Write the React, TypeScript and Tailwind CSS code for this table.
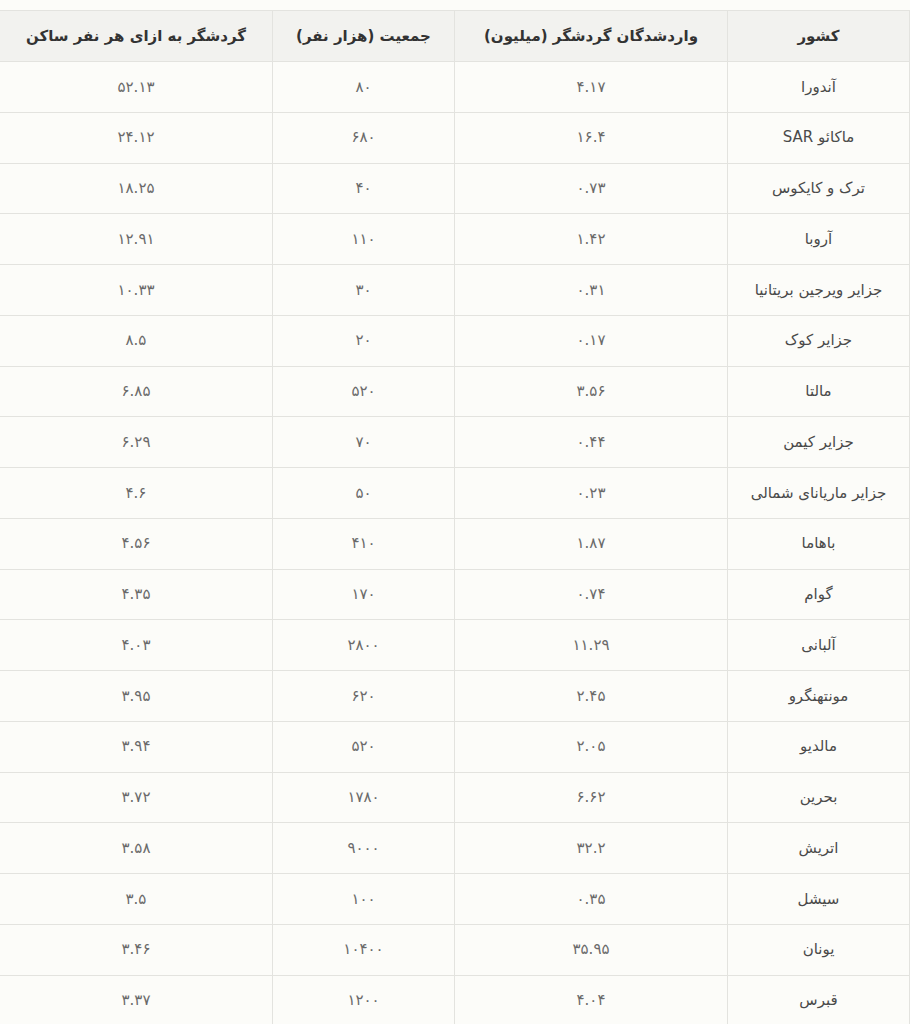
const rows: [string, string, string, string][] = [
  ["آندورا", "۴.۱۷", "۸۰", "۵۲.۱۳"],
  ["ماکائو SAR", "۱۶.۴", "۶۸۰", "۲۴.۱۲"],
  ["ترک و کایکوس", "۰.۷۳", "۴۰", "۱۸.۲۵"],
  ["آروبا", "۱.۴۲", "۱۱۰", "۱۲.۹۱"],
  ["جزایر ویرجین بریتانیا", "۰.۳۱", "۳۰", "۱۰.۳۳"],
  ["جزایر کوک", "۰.۱۷", "۲۰", "۸.۵"],
  ["مالتا", "۳.۵۶", "۵۲۰", "۶.۸۵"],
  ["جزایر کیمن", "۰.۴۴", "۷۰", "۶.۲۹"],
  ["جزایر ماریانای شمالی", "۰.۲۳", "۵۰", "۴.۶"],
  ["باهاما", "۱.۸۷", "۴۱۰", "۴.۵۶"],
  ["گوام", "۰.۷۴", "۱۷۰", "۴.۳۵"],
  ["آلبانی", "۱۱.۲۹", "۲۸۰۰", "۴.۰۳"],
  ["مونتهنگرو", "۲.۴۵", "۶۲۰", "۳.۹۵"],
  ["مالدیو", "۲.۰۵", "۵۲۰", "۳.۹۴"],
  ["بحرین", "۶.۶۲", "۱۷۸۰", "۳.۷۲"],
  ["اتریش", "۳۲.۲", "۹۰۰۰", "۳.۵۸"],
  ["سیشل", "۰.۳۵", "۱۰۰", "۳.۵"],
  ["یونان", "۳۵.۹۵", "۱۰۴۰۰", "۳.۴۶"],
  ["قبرس", "۴.۰۴", "۱۲۰۰", "۳.۳۷"],
];

export default function App() {
  return (
    <div
      dir="rtl"
      className="min-h-screen bg-[#fcfcf9] pt-[10px] font-['DejaVu_Sans','Noto_Sans',sans-serif]"
    >
      <table className="w-full table-fixed border-collapse text-center text-[15px]">
        <colgroup>
          <col className="w-[182px]" />
          <col className="w-[273px]" />
          <col className="w-[182px]" />
          <col className="w-[273px]" />
        </colgroup>
        <thead>
          <tr className="h-[51px] bg-[#f2f2ef] text-[#333] font-bold">
            <th className="border border-[#e3e3df]">کشور</th>
            <th className="border border-[#e3e3df]">واردشدگان گردشگر (میلیون)</th>
            <th className="border border-[#e3e3df]">جمعیت (هزار نفر)</th>
            <th className="border border-[#e3e3df]">گردشگر به ازای هر نفر ساکن</th>
          </tr>
        </thead>
        <tbody>
          {rows.map((r) => (
            <tr key={r[0]} className="h-[50.75px]">
              <td className="border border-[#e3e3df] text-[#4a4a4a]">{r[0]}</td>
              <td className="border border-[#e3e3df] text-[#6a6a6a]">{r[1]}</td>
              <td className="border border-[#e3e3df] text-[#6a6a6a]">{r[2]}</td>
              <td className="border border-[#e3e3df] text-[#6a6a6a]">{r[3]}</td>
            </tr>
          ))}
        </tbody>
      </table>
    </div>
  );
}
